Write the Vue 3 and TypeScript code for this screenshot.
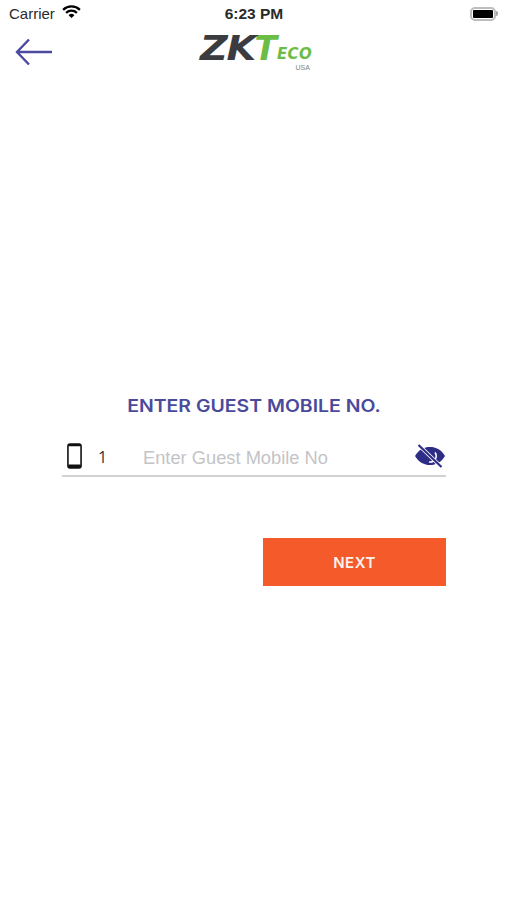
<template>
  <div class="pantalla">
    <div class="status">
      <div class="status-izq">
        <span>Carrier</span>
        <svg class="wifi" viewBox="0 0 20 15" width="19" height="14">
          <path d="M1 5.2a13 13 0 0 1 18 0" fill="none" stroke="#000" stroke-width="2.4" />
          <path d="M4.2 8.4a8.6 8.6 0 0 1 11.6 0" fill="none" stroke="#000" stroke-width="2.4" />
          <path d="M6.9 10.9L10 14l3.1-3.1a4.4 4.4 0 0 0-6.2 0z" fill="#000" />
        </svg>
      </div>
      <div class="hora">6:23 PM</div>
      <div class="status-der">
        <div class="bateria"><div class="carga"></div></div>
        <div class="punta"></div>
      </div>
    </div>

    <header class="cabecera">
      <button class="volver" type="button" aria-label="Volver">
        <svg viewBox="0 0 38 28" width="38" height="28">
          <path d="M37 14H2M14 1.5L2 14l12 12.5" fill="none" stroke="#4b4aa0" stroke-width="2.4" />
        </svg>
      </button>
      <div class="logo">
        <span class="logo-zk">ZK</span><span class="logo-t">T</span><div class="logo-lado">
          <span class="logo-eco">ECO</span>
          <span class="logo-usa">USA</span>
        </div>
      </div>
    </header>

    <main class="contenido">
      <h1 class="titulo">ENTER GUEST MOBILE NO.</h1>

      <div class="campo">
        <svg class="movil" viewBox="0 0 16 26" width="15" height="26" preserveAspectRatio="none">
          <rect x="1" y="1" width="14" height="24" rx="2.2" fill="none" stroke="#111" stroke-width="1.7" />
          <rect x="1" y="21.4" width="14" height="3.6" rx="1.4" fill="#111" />
          <rect x="1" y="1" width="14" height="2.2" rx="1" fill="#111" />
        </svg>
        <span class="prefijo">1</span>
        <input class="entrada" type="text" placeholder="Enter Guest Mobile No" />
        <svg class="ojo" viewBox="0 0 32 24" width="32" height="24">
          <path d="M1 12C5 5.500 10 3 16 3s11 2.500 15 9c-4 6.500-9 9-15 9S5 18.500 1 12z" fill="#2e2d85" />
          <path d="M21 8.500a6 6 0 0 1-6 9.400 6 6 0 0 0 6-9.400z" fill="#fff" stroke="#fff" stroke-width="1.500" />
          <circle cx="16" cy="12" r="3" fill="#2e2d85" />
          <path d="M4.500 1l23 22" stroke="#fff" stroke-width="3.800" />
          <path d="M4.500 1l23 22" stroke="#2e2d85" stroke-width="2.200" />
        </svg>
      </div>

      <div class="acciones">
        <button class="siguiente" type="button">NEXT</button>
      </div>
    </main>
  </div>
</template>

<script setup lang="ts">
</script>

<style>
html, body {
  margin: 0;
  background: #fff;
}
</style>

<style scoped>
.pantalla {
  width: 507px;
  height: 900px;
  overflow: hidden;
  background: #fff;
  font-family: "Open Sans", "Liberation Sans", sans-serif;
}

.status {
  height: 27px;
  display: grid;
  grid-template-columns: 1fr auto 1fr;
  align-items: center;
  padding: 0 9px;
  font-family: "Liberation Sans", sans-serif;
  font-size: 15px;
  color: #2a2a2a;
}

.status-izq {
  display: flex;
  align-items: center;
  gap: 7px;
}

.wifi {
  margin-top: -3px;
}

.hora {
  font-weight: 700;
  font-size: 15.500px;
  padding-left: 1px;
}

.status-der {
  display: flex;
  justify-content: flex-end;
  align-items: center;
  padding-right: 0;
}

.bateria {
  width: 26px;
  height: 14px;
  box-sizing: border-box;
  border: 2px solid #bdbdbd;
  border-radius: 5px;
  padding: 1px;
}

.carga {
  height: 100%;
  background: #000;
  border-radius: 1px;
}

.punta {
  width: 2px;
  height: 5px;
  background: #a5a5a5;
  border-radius: 0 2px 2px 0;
}

.cabecera {
  height: 51px;
  position: relative;
  display: flex;
  justify-content: center;
}

.volver {
  position: absolute;
  left: 15px;
  top: 11px;
  padding: 0;
  border: 0;
  background: none;
  line-height: 0;
}

.logo {
  display: flex;
  align-items: flex-start;
  height: 46px;
  margin-left: 5px;
  font-family: "DejaVu Sans", sans-serif;
  font-weight: 700;
  font-style: italic;
  line-height: 1;
}

.logo-zk {
  display: inline-block;
  font-size: 33px;
  letter-spacing: -1px;
  color: #3b3c40;
  margin-top: 5px;
  margin-right: 7px;
  transform: scaleX(1.16);
  transform-origin: left;
}

.logo-t {
  font-size: 33px;
  color: #6cbd45;
  margin-top: 5px;
}

.logo-lado {
  display: flex;
  flex-direction: column;
  align-items: flex-end;
}

.logo-eco {
  font-size: 15px;
  letter-spacing: 0.3px;
  color: #6cbd45;
  margin-top: 20px;
}

.logo-usa {
  font-family: "Liberation Sans", sans-serif;
  font-size: 7px;
  font-style: normal;
  font-weight: 400;
  color: #808080;
  margin-top: 2px;
  margin-right: 2px;
}

.contenido {
  padding: 316px 61px 0 62px;
}

.titulo {
  margin: 0;
  text-align: center;
  font-family: Inter, "Open Sans", sans-serif;
  font-size: 17px;
  line-height: 24px;
  font-weight: 600;
  color: #4a4a9c;
  transform: scaleX(1.144);
}

.campo {
  margin-top: 18px;
  height: 39px;
  display: flex;
  align-items: center;
  border-bottom: 2px solid #d2d2d2;
  padding: 0 0 0 5px;
}

.prefijo {
  width: 45px;
  margin: 2px 0 0 16px;
  font-size: 16px;
  color: #333;
  flex: none;
}

.entrada {
  flex: 1;
  min-width: 0;
  border: 0;
  outline: 0;
  padding: 4px 0 0;
  background: none;
  font-family: "Liberation Sans", sans-serif;
  font-size: 18.300px;
  color: #333;
}

.entrada::placeholder {
  color: #c4c4c6;
  opacity: 1;
}

.ojo {
  margin-top: 1px;
}

.acciones {
  display: flex;
  justify-content: flex-end;
  margin-top: 61px;
}

.siguiente {
  width: 183px;
  height: 48px;
  border: 0;
  background: #f45a2a;
  color: #fdf3ee;
  font-family: Inter, "Open Sans", sans-serif;
  font-size: 15px;
  letter-spacing: 0.5px;
  font-weight: 600;
}
</style>
